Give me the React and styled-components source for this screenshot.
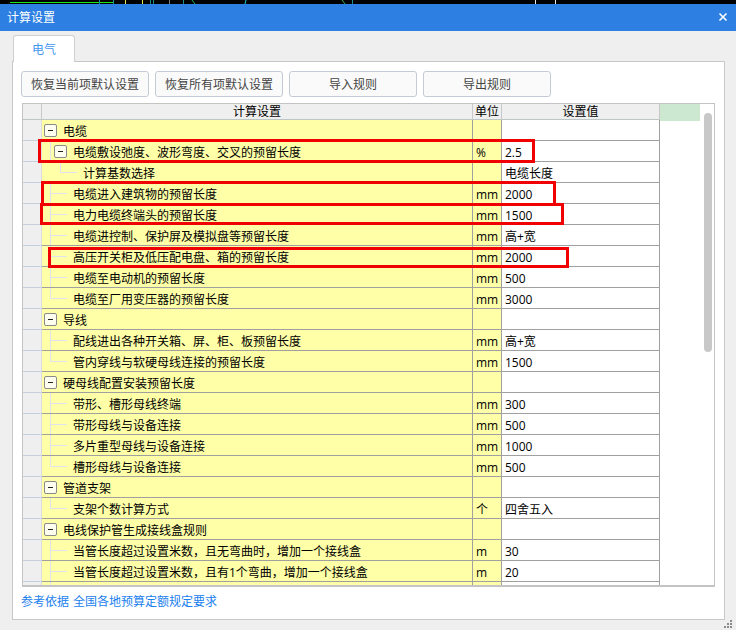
import React from 'react'
import styled, { createGlobalStyle } from 'styled-components'

const GlobalStyle = createGlobalStyle`
html, body {
    margin: 0;
    padding: 0;
    background: #efefef;
}
* {
    box-sizing: border-box;
}
`

const rows = [
    { level: 0, name: '电缆' },
    { level: 1, toggle: true, name: '电缆敷设弛度、波形弯度、交叉的预留长度', unit: '%', value: '2.5' },
    { level: 2, last: true, name: '计算基数选择', value: '电缆长度' },
    { level: 1, name: '电缆进入建筑物的预留长度', unit: 'mm', value: '2000' },
    { level: 1, name: '电力电缆终端头的预留长度', unit: 'mm', value: '1500' },
    { level: 1, name: '电缆进控制、保护屏及模拟盘等预留长度', unit: 'mm', value: '高+宽' },
    { level: 1, name: '高压开关柜及低压配电盘、箱的预留长度', unit: 'mm', value: '2000' },
    { level: 1, name: '电缆至电动机的预留长度', unit: 'mm', value: '500' },
    { level: 1, last: true, name: '电缆至厂用变压器的预留长度', unit: 'mm', value: '3000' },
    { level: 0, name: '导线' },
    { level: 1, name: '配线进出各种开关箱、屏、柜、板预留长度', unit: 'mm', value: '高+宽' },
    { level: 1, last: true, name: '管内穿线与软硬母线连接的预留长度', unit: 'mm', value: '1500' },
    { level: 0, name: '硬母线配置安装预留长度' },
    { level: 1, name: '带形、槽形母线终端', unit: 'mm', value: '300' },
    { level: 1, name: '带形母线与设备连接', unit: 'mm', value: '500' },
    { level: 1, name: '多片重型母线与设备连接', unit: 'mm', value: '1000' },
    { level: 1, last: true, name: '槽形母线与设备连接', unit: 'mm', value: '500' },
    { level: 0, name: '管道支架' },
    { level: 1, last: true, name: '支架个数计算方式', unit: '个', value: '四舍五入' },
    { level: 0, name: '电线保护管生成接线盒规则' },
    { level: 1, name: '当管长度超过设置米数\uFF0C且无弯曲时\uFF0C增加一个接线盒', unit: 'm', value: '30' },
    { level: 1, name: '当管长度超过设置米数\uFF0C且有1个弯曲\uFF0C增加一个接线盒', unit: 'm', value: '20' },
    { level: 1, name: '', unit: '', value: '' },
]

// red marks drawn over the table, coordinates relative to the table box
const marks = [
    { x: 15, y: 35, w: 497, h: 24 },
    { x: 18, y: 77, w: 515, h: 25 },
    { x: 17, y: 99, w: 524, h: 22 },
    { x: 25, y: 143, w: 521, h: 21 },
]

function TopStrip() {
    return (
        <Strip width="736" height="4" viewBox="0 0 736 4">
            <path d="M10 2.5H113" stroke="#19e619" />
            <path d="M99.5 0V4M113.5 0V4M150.5 0V4M153.5 0V4M183.5 0V4M352.5 0V4" stroke="#1f8f8f" />
            <path d="M125.5 0V4M142.5 0V4" stroke="#e8e84a" />
            <path d="M169.5 0V4" stroke="#808080" />
            <path d="M192 0L195 4M342 0L345 4" stroke="#22b34a" />
            <path d="M246 0L245 4" stroke="#19d0e0" />
            <path d="M535.5 0V4M555.5 0V4" stroke="#e8e8e8" />
        </Strip>
    )
}

function TreeName({ row }) {
    if (row.level === 0) {
        return (
            <NameCell>
                <Toggle $left={2} />
                <NameText>{row.name}</NameText>
            </NameCell>
        )
    }
    if (row.toggle) {
        return (
            <NameCell>
                <Guide $width={12} $lineAt={8} />
                <Toggle />
                <NameText>{row.name}</NameText>
            </NameCell>
        )
    }
    if (row.level === 2) {
        return (
            <NameCell>
                <Guide $width={41} $lineAt={18} $branch $last $length={17} />
                <NameText $gap={0}>{row.name}</NameText>
            </NameCell>
        )
    }
    return (
        <NameCell>
            <Guide $width={31} $lineAt={8} $branch $last={row.last} $length={17} />
            <NameText $gap={0}>{row.name}</NameText>
        </NameCell>
    )
}

export default function App() {
    return (
        <>
            <GlobalStyle />
            <Page>
                <TopStrip />
                <TitleBar>
                    <Title>计算设置</Title>
                    <svg width="10" height="10" viewBox="0 0 10 10">
                        <path d="M1.5 1.5L8.5 8.5M8.5 1.5L1.5 8.5" stroke="#fff" strokeWidth="1.6" />
                    </svg>
                </TitleBar>
                <Body>
                    <TabStrip>
                        <Tab>电气</Tab>
                    </TabStrip>
                    <Panel>
                        <Toolbar>
                            <ToolButton>恢复当前项默认设置</ToolButton>
                            <ToolButton>恢复所有项默认设置</ToolButton>
                            <ToolButton>导入规则</ToolButton>
                            <ToolButton>导出规则</ToolButton>
                        </Toolbar>
                        <TableBox>
                            <Grid>
                                <HeaderRow>
                                    <HeaderCell />
                                    <HeaderCell>计算设置</HeaderCell>
                                    <HeaderCell>单位</HeaderCell>
                                    <HeaderCell>设置值</HeaderCell>
                                </HeaderRow>
                                {rows.map((row, i) => (
                                    <Row key={i}>
                                        <Gutter />
                                        <TreeName row={row} />
                                        <UnitCell>{row.unit}</UnitCell>
                                        <ValueCell>{row.value}</ValueCell>
                                    </Row>
                                ))}
                            </Grid>
                            <Side>
                                <SideHeader />
                                <Thumb />
                            </Side>
                            {marks.map((m, i) => (
                                <RedMark key={i} $x={m.x} $y={m.y} $w={m.w} $h={m.h} />
                            ))}
                        </TableBox>
                        <Reference>参考依据 全国各地预算定额规定要求</Reference>
                    </Panel>
                    <Footer>
                        <svg width="9" height="8" viewBox="0 0 9 8">
                            <path
                                d="M6 0h2v2H6zM3 3h2v2H3zM6 3h2v2H6zM0 6h2v2H0zM3 6h2v2H3zM6 6h2v2H6z"
                                fill="#8c8c8c"
                            />
                        </svg>
                    </Footer>
                </Body>
            </Page>
        </>
    )
}

const Page = styled.div`
width: 736px;
height: 630px;
overflow: hidden;
display: flex;
flex-direction: column;
background: #efefef;
font-family: "Open Sans", "Noto Sans CJK SC", sans-serif;
font-size: 12px;
color: #000;
`
const Strip = styled.svg`
display: block;
flex: none;
background: #000;
`
const TitleBar = styled.div`
flex: none;
height: 27px;
padding: 0 8px 2px 7px;
display: flex;
align-items: center;
justify-content: space-between;
background: #2d7fe2;
`
const Title = styled.span`
color: #fff;
font-size: 12px;
`
const Body = styled.div`
flex: 1;
min-height: 0;
display: flex;
flex-direction: column;
padding: 4px 11px 0 12px;
`
const TabStrip = styled.div`
flex: none;
height: 26px;
padding-left: 1px;
display: flex;
`
const Tab = styled.div`
width: 62px;
height: 27px;
position: relative;
z-index: 1;
display: flex;
align-items: center;
justify-content: center;
background: #fff;
border: 1px solid #cfcfcf;
border-bottom: none;
border-radius: 3px 3px 0 0;
color: #3f97f0;
`
const Panel = styled.div`
flex: none;
height: 559px;
display: flex;
flex-direction: column;
padding: 9px 9px 0 8px;
background: #fff;
border: 1px solid #c8c8c8;
`
const Toolbar = styled.div`
flex: none;
display: flex;
gap: 6px;
`
const ToolButton = styled.button`
width: 128px;
height: 26px;
padding: 0;
font: inherit;
color: #444;
background: #fafafa;
border: 1px solid #c5cbd6;
border-radius: 3px;
`
const TableBox = styled.div`
flex: none;
position: relative;
height: 484px;
width: 693px;
margin: 6px 0 0 1px;
display: flex;
overflow: hidden;
border: 1px solid #c4c4c4;
border-bottom-width: 2px;
`
const Grid = styled.div`
flex: none;
width: 637px;
`
const HeaderRow = styled.div`
height: 16px;
display: grid;
grid-template-columns: 19px 431px 29px 158px;
`
const HeaderCell = styled.div`
display: flex;
align-items: center;
justify-content: center;
padding-top: 1px;
background: #efefef;
border-right: 1px solid #c8c8c8;
border-bottom: 1px solid #bcc6c6;
line-height: 14px;
`
const Row = styled.div`
height: 21px;
display: grid;
grid-template-columns: 19px 431px 29px 158px;
grid-template-rows: 21px;
line-height: 17px;
`
const Gutter = styled.div`
background: #efefef;
border-right: 1px solid #dcdcdc;
border-bottom: 1px solid #c6cfdd;
`
const NameCell = styled.div`
display: flex;
align-items: center;
background: #ffffa8;
border-right: 1px solid #a0a0a0;
border-bottom: 1px solid #a0a0a0;
white-space: nowrap;
overflow: hidden;
`
const Guide = styled.span`
flex: none;
position: relative;
align-self: stretch;
width: ${p => p.$width}px;
&::before {
    content: "";
    position: absolute;
    left: ${p => p.$lineAt}px;
    top: 0;
    bottom: ${p => (p.$last ? '10px' : '0')};
    border-left: 1px solid #dfe3ef;
}
&::after {
    content: "";
    display: ${p => (p.$branch ? 'block' : 'none')};
    position: absolute;
    left: ${p => p.$lineAt}px;
    top: 10px;
    width: ${p => p.$length}px;
    border-top: 1px solid #dfe3ef;
}
`
const Toggle = styled.span`
flex: none;
position: relative;
width: 13px;
height: 13px;
margin: 1px 0 0 ${p => p.$left || 0}px;
background: #fdfdf0;
border: 1px solid #8a8a8a;
border-radius: 2px;
&::after {
    content: "";
    position: absolute;
    left: 3px;
    top: 5px;
    width: 5px;
    border-top: 1px solid #222;
}
`
const NameText = styled.span`
margin-left: ${p => (p.$gap === undefined ? 6 : p.$gap)}px;
padding-top: 3px;
`
const UnitCell = styled.div`
padding: 3px 0 0 3px;
background: #ffffa8;
border-right: 1px solid #a0a0a0;
border-bottom: 1px solid #a0a0a0;
`
const ValueCell = styled.div`
padding: 3px 0 0 3px;
background: #fff;
border-right: 1px solid #a0a0a0;
border-bottom: 1px solid #a0a0a0;
`
const Side = styled.div`
flex: 1;
display: flex;
align-items: flex-start;
`
const SideHeader = styled.div`
flex: none;
width: 40px;
height: 17px;
background: #cde8d0;
`
const Thumb = styled.div`
flex: none;
width: 8px;
height: 239px;
margin: 9px 0 0 4px;
background: #c8c8c8;
border-radius: 4px;
`
const RedMark = styled.div`
position: absolute;
left: ${p => p.$x}px;
top: ${p => p.$y}px;
width: ${p => p.$w}px;
height: ${p => p.$h}px;
border: 3px solid #f00000;
pointer-events: none;
`
const Reference = styled.div`
flex: none;
margin-top: 6px;
line-height: 18px;
word-spacing: 1px;
color: #1a80ee;
`
const Footer = styled.div`
flex: 1;
display: flex;
justify-content: flex-end;
align-items: flex-end;
padding-bottom: 2px;
margin-right: -8px;
`
